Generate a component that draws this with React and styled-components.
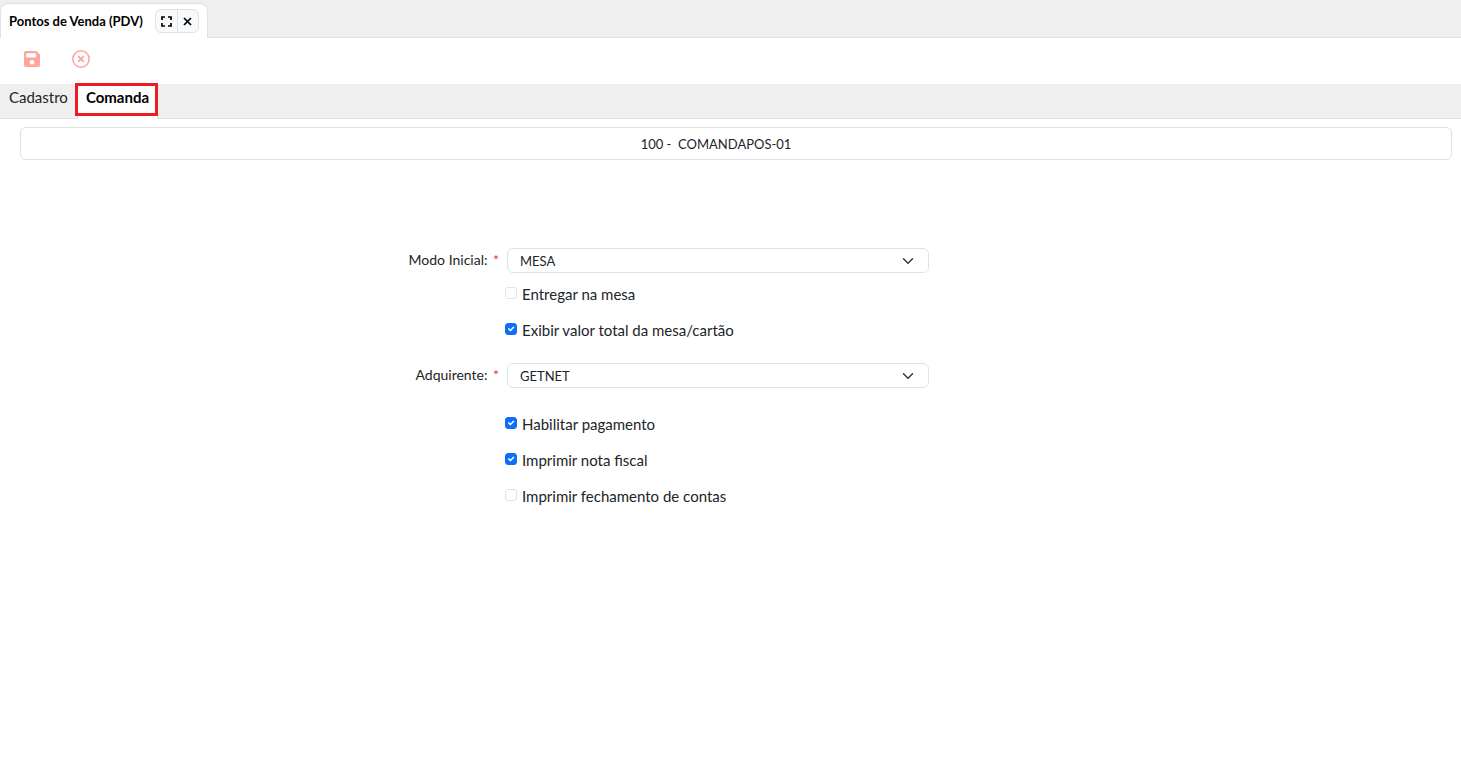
import { useState } from "react";
import styled, { createGlobalStyle } from "styled-components";

const GlobalStyle = createGlobalStyle`
  * {
    box-sizing: border-box;
  }
  body {
    margin: 0;
    background-color: white;
    color: #212529;
    font-family: "Lato", "Liberation Sans", sans-serif;
    font-size: 13px;
    line-height: 20px;
  }
  button, select, input {
    font: inherit;
    color: inherit;
    margin: 0;
  }
`;

const Container = styled.div``;

const WindowBar = styled.header`
  display: flex;
  height: 38px;
  padding-top: 3px;
  background-color: #efefef;
  box-shadow: inset 0 -1px #dee2e6;
`;

const WindowTab = styled.div`
  display: flex;
  align-items: center;
  gap: 12px;
  padding: 0 8px;
  background-color: white;
  border: 1px solid #dee2e6;
  border-bottom: none;
  border-radius: 8px 8px 0 0;
`;

const WindowTitle = styled.h1`
  margin: 0;
  font-size: 13px;
  font-weight: 700;
  color: black;
`;

const WindowButtons = styled.div`
  display: flex;
  height: 24px;
  border: 1px solid #dee2e6;
  border-radius: 6px;
  background-color: #f8f9fa;
`;

const WindowButton = styled.button`
  display: flex;
  align-items: center;
  justify-content: center;
  width: 21px;
  padding: 0;
  border: none;
  background: none;
  color: black;
  cursor: pointer;

  & + & {
    border-left: 1px solid #dee2e6;
  }
`;

const Toolbar = styled.div`
  display: flex;
  align-items: center;
  gap: 27px;
  height: 46px;
  padding: 0 21px 4px;
`;

const ToolButton = styled.button`
  display: flex;
  align-items: center;
  justify-content: center;
  width: 22px;
  height: 22px;
  padding: 0;
  border: none;
  background: none;
  color: #ffa5a0;
`;

const Tabs = styled.nav`
  display: flex;
  height: 35px;
  background-color: #efefef;
  box-shadow: inset 0 -1px #dee2e6;
`;

const Tab = styled.a`
  position: relative;
  padding: 3px 8px;
  border: 1px solid ${(props) => (props.$active ? "#dee2e6" : "transparent")};
  border-width: 0 1px;
  background-color: ${(props) => (props.$active ? "white" : "transparent")};
  font-size: 15px;
  font-weight: ${(props) => (props.$active ? "700" : "400")};
  color: ${(props) => (props.$active ? "black" : "#212529")};
  text-decoration: none;
`;

const Highlight = styled.span`
  position: absolute;
  top: -1px;
  right: -1px;
  bottom: 3px;
  left: -3px;
  border: 3px solid #ed1c24;
  pointer-events: none;
`;

const Content = styled.main`
  padding: 8px 0;
`;

const Heading = styled.div`
  margin: 0 9px 0 20px;
  padding: 6px 40px 5px 0;
  border: 1px solid #dee2e6;
  border-radius: 6px;
  text-align: center;
  white-space: pre;
`;

const Form = styled.form`
  display: grid;
  grid-template-columns: 507fr 422fr 532fr;
  padding-top: 88px;
`;

const Label = styled.label`
  grid-column: 1;
  padding: 2px 8px 0 0;
  font-size: 14px;
  text-align: right;
`;

const Required = styled.span`
  margin-left: 2px;
  color: #dc3545;
`;

const SelectBox = styled.div`
  position: relative;
`;

const Select = styled.select`
  display: block;
  width: 100%;
  height: 25px;
  padding: 0 36px 0 12px;
  appearance: none;
  border: 1px solid #dee2e6;
  border-radius: 6px;
  background-color: white;
`;

const SelectArrow = styled.svg`
  position: absolute;
  top: 7px;
  right: 15px;
  pointer-events: none;
`;

const Options = styled.div`
  grid-column: 2;
  display: flex;
  flex-direction: column;
  gap: 16px;
  margin-left: -2px;
  padding: ${(props) => (props.$spaced ? "26px 0" : "11px 0 23px")};
`;

const Option = styled.label`
  display: flex;
  align-items: flex-start;
  gap: 5px;
  font-size: 15px;
`;

const CheckBox = styled.span`
  display: grid;
  padding-top: 3px;

  & > * {
    grid-area: 1 / 1;
  }
`;

const CheckInput = styled.input`
  width: 12px;
  height: 12px;
  appearance: none;
  border: 1px solid #dee2e6;
  border-radius: 3px;
  background-color: white;

  &:checked {
    border-color: #0d6efd;
    background-color: #0d6efd;
  }
`;

const CheckMark = styled.svg`
  pointer-events: none;
`;

const Check = ({ label, checked: initial = false }) => {
  const [checked, setChecked] = useState(initial);

  return (
    <Option>
      <CheckBox>
        <CheckInput
          type="checkbox"
          checked={checked}
          onChange={(e) => setChecked(e.target.checked)}
        />
        {checked && (
          <CheckMark width="12" height="12" viewBox="0 0 20 20" fill="none" stroke="white" strokeWidth="2.8" strokeLinecap="round" strokeLinejoin="round">
            <path d="M6.5 10l2.5 2.5l5-5" />
          </CheckMark>
        )}
      </CheckBox>
      {label}
    </Option>
  );
};

const SelectField = ({ id, label, options }) => (
  <>
    <Label htmlFor={id}>
      {label}: <Required>*</Required>
    </Label>
    <SelectBox>
      <Select id={id} required>
        {options.map((option) => (
          <option key={option}>{option}</option>
        ))}
      </Select>
      <SelectArrow width="12" height="12" viewBox="0 0 16 16" fill="none" stroke="#343a40" strokeWidth="2" strokeLinecap="round" strokeLinejoin="round">
        <path d="M2 5l6 6 6-6" />
      </SelectArrow>
    </SelectBox>
  </>
);

const App = () => {
  return (
    <Container>
      <GlobalStyle />
      <WindowBar>
        <WindowTab>
          <WindowTitle>Pontos de Venda (PDV)</WindowTitle>
          <WindowButtons>
            <WindowButton type="button" aria-label="Maximizar">
              <svg width="11" height="11" viewBox="0 0 11 11" fill="none" stroke="currentColor" strokeWidth="1.7">
                <path d="M1 4V1h3M7 1h3v3M10 7v3H7M4 10H1V7" />
              </svg>
            </WindowButton>
            <WindowButton type="button" aria-label="Fechar">
              <svg width="9" height="9" viewBox="0 0 9 9" fill="none" stroke="currentColor" strokeWidth="1.7">
                <path d="M1 1l7 7M8 1L1 8" />
              </svg>
            </WindowButton>
          </WindowButtons>
        </WindowTab>
      </WindowBar>

      <Toolbar>
        <ToolButton type="button" aria-label="Salvar" disabled>
          <svg width="16" height="16" viewBox="0 0 16 16" fill="currentColor" fillRule="evenodd">
            <path d="M2 0h10.5L16 3.5V14a2 2 0 0 1-2 2H2a2 2 0 0 1-2-2V2a2 2 0 0 1 2-2zM3 2.2a.8.8 0 0 0-.8.8v2.6a.8.8 0 0 0 .8.8h8.2a.8.8 0 0 0 .8-.8V3a.8.8 0 0 0-.8-.8zM8 9a2.3 2.3 0 1 0 0 4.6A2.3 2.3 0 0 0 8 9z" />
          </svg>
        </ToolButton>
        <ToolButton type="button" aria-label="Cancelar" disabled>
          <svg width="18" height="18" viewBox="0 0 18 18" fill="none" stroke="currentColor">
            <circle cx="9" cy="9" r="8.2" strokeWidth="1.6" />
            <path d="M6.2 6.2l5.6 5.6M11.8 6.2l-5.6 5.6" strokeWidth="1.8" />
          </svg>
        </ToolButton>
      </Toolbar>

      <Tabs>
        <Tab href="#cadastro">Cadastro</Tab>
        <Tab href="#comanda" $active>
          Comanda
          <Highlight />
        </Tab>
      </Tabs>

      <Content>
        <Heading>{"100 -  COMANDAPOS-01"}</Heading>
        <Form>
          <SelectField id="modo" label="Modo Inicial" options={["MESA", "CARTÃO"]} />
          <Options>
            <Check label="Entregar na mesa" />
            <Check label="Exibir valor total da mesa/cartão" checked />
          </Options>
          <SelectField id="adquirente" label="Adquirente" options={["GETNET", "CIELO"]} />
          <Options $spaced>
            <Check label="Habilitar pagamento" checked />
            <Check label="Imprimir nota fiscal" checked />
            <Check label="Imprimir fechamento de contas" />
          </Options>
        </Form>
      </Content>
    </Container>
  );
};

export default App;
